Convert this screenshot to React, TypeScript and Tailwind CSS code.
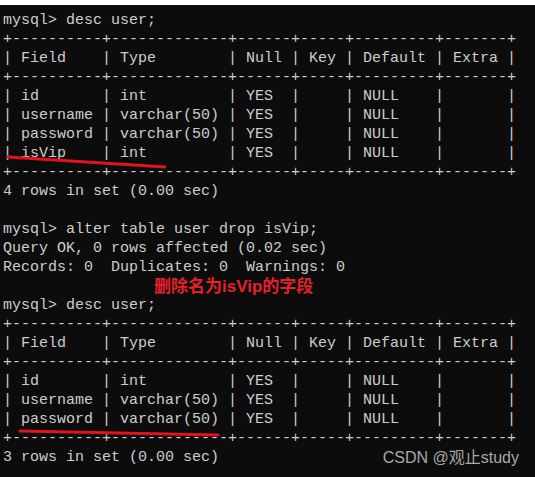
import React from 'react';

const lines: string[] = [
  'mysql> desc user;',
  '+----------+-------------+------+-----+---------+-------+',
  '| Field    | Type        | Null | Key | Default | Extra |',
  '+----------+-------------+------+-----+---------+-------+',
  '| id       | int         | YES  |     | NULL    |       |',
  '| username | varchar(50) | YES  |     | NULL    |       |',
  '| password | varchar(50) | YES  |     | NULL    |       |',
  '| isVip    | int         | YES  |     | NULL    |       |',
  '+----------+-------------+------+-----+---------+-------+',
  '4 rows in set (0.00 sec)',
  '',
  'mysql> alter table user drop isVip;',
  'Query OK, 0 rows affected (0.02 sec)',
  'Records: 0  Duplicates: 0  Warnings: 0',
  '__NOTE__',
  'mysql> desc user;',
  '+----------+-------------+------+-----+---------+-------+',
  '| Field    | Type        | Null | Key | Default | Extra |',
  '+----------+-------------+------+-----+---------+-------+',
  '| id       | int         | YES  |     | NULL    |       |',
  '| username | varchar(50) | YES  |     | NULL    |       |',
  '| password | varchar(50) | YES  |     | NULL    |       |',
  '+----------+-------------+------+-----+---------+-------+',
  '3 rows in set (0.00 sec)',
];

export default function App() {
  return (
    <div className="w-[535px] h-[477px] bg-white overflow-hidden">
      <div className="relative mt-[5px] h-[472px] bg-[#0c0c0c] pt-[6px] pl-[3px]">
        {lines.map((line, i) =>
          line === '__NOTE__' ? (
            <div key={i} className="h-[19px] flex items-center pl-[151px]">
              <span className="text-[17px] font-bold leading-none text-[#e5202a] [font-family:'Liberation_Sans','Noto_Sans_CJK_SC',sans-serif]">
                删除名为isVip的字段
              </span>
            </div>
          ) : (
            <pre
              key={i}
              className="h-[19px] text-[15px] leading-[19px] text-[#cccccc] whitespace-pre [font-family:'Liberation_Mono',monospace]"
            >
              {line}
            </pre>
          )
        )}

        {/* red underlines drawn on the screenshot */}
        <svg className="absolute left-0 top-0 pointer-events-none" width="535" height="472">
          <line x1="8" y1="152" x2="165" y2="162" stroke="#e3121d" strokeWidth="3" strokeLinecap="round" />
          <line x1="20" y1="426" x2="218" y2="430" stroke="#e3121d" strokeWidth="3" strokeLinecap="round" />
        </svg>

        <span className="absolute right-[16px] top-[443px] text-[16px] leading-[20px] text-[#a8a8a8] [font-family:'Liberation_Sans','Noto_Sans_CJK_SC',sans-serif]">
          CSDN @观止study
        </span>
      </div>
    </div>
  );
}
